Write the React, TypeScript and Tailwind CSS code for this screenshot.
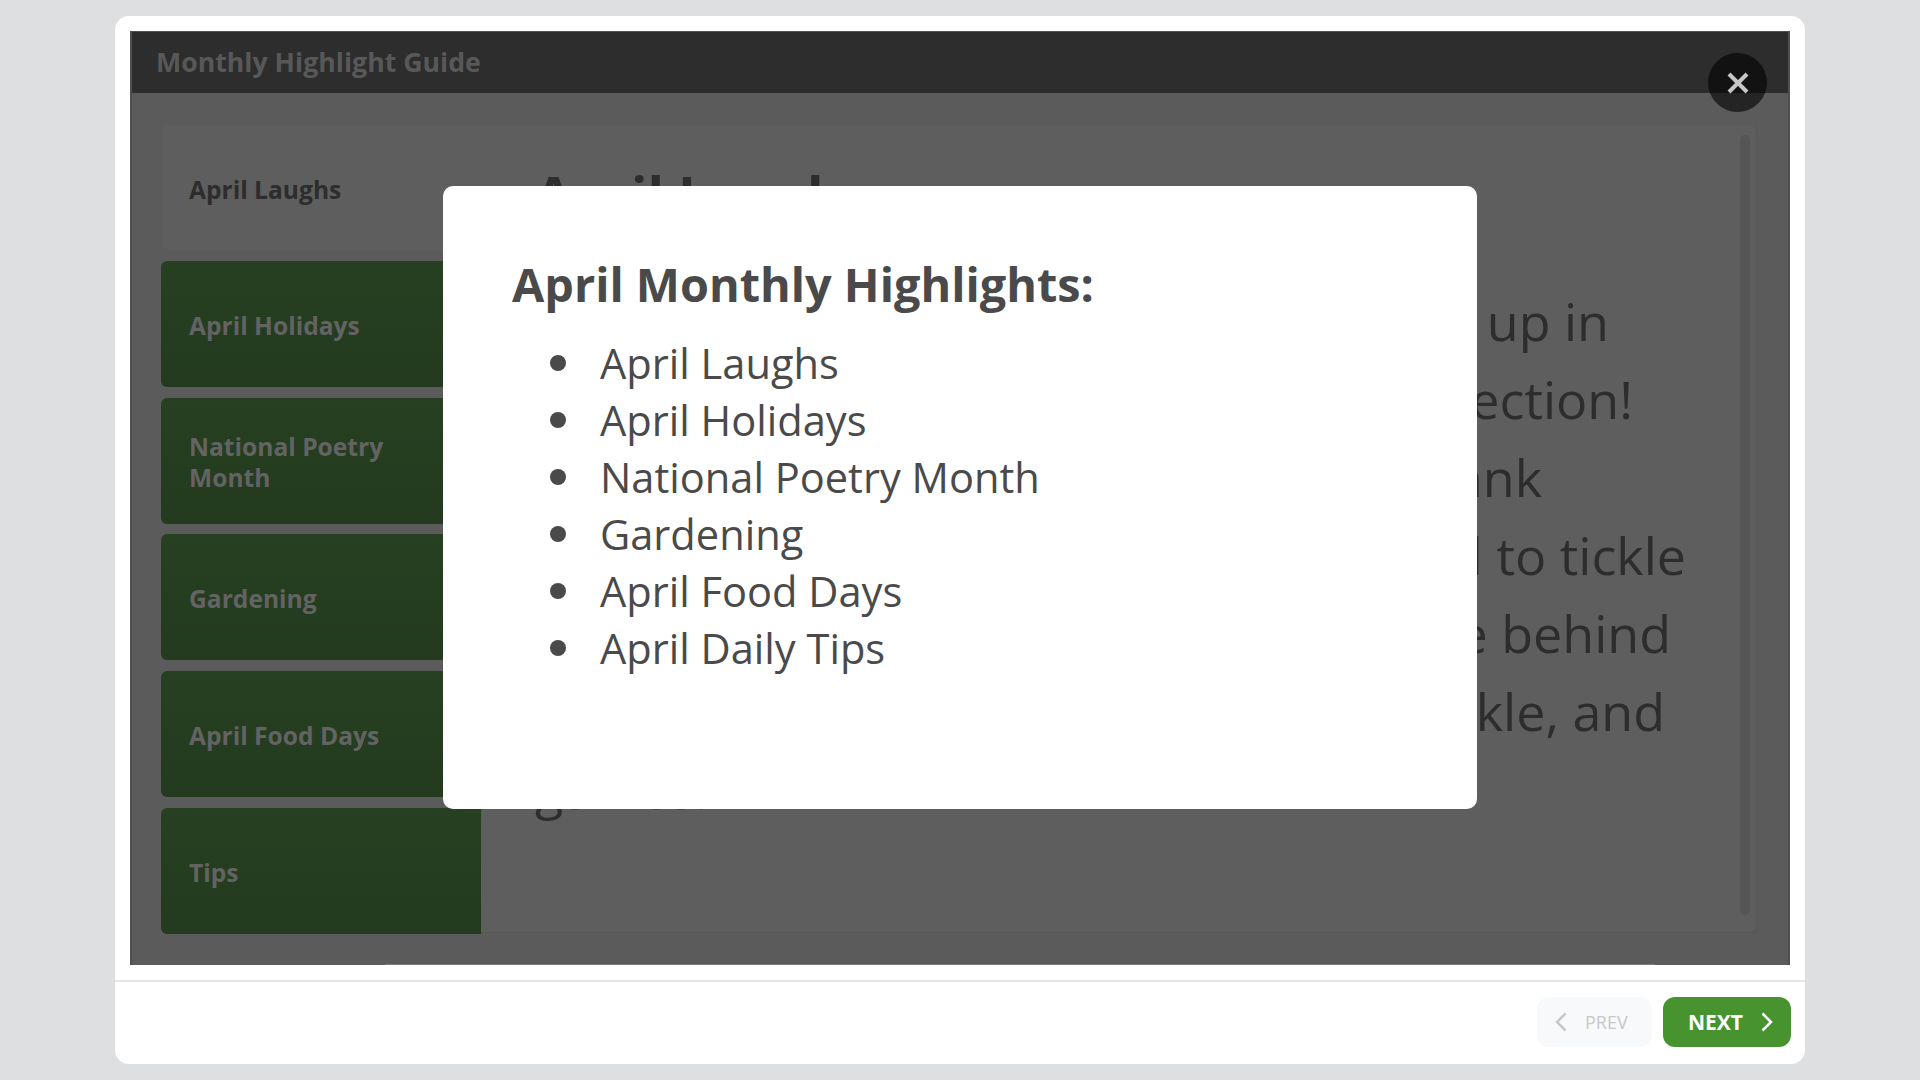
const tabs = ["April Holidays", "National Poetry Month", "Gardening", "April Food Days", "Tips"];

const topics = ["April Laughs", "April Holidays", "National Poetry Month", "Gardening", "April Food Days", "April Daily Tips"];

// line widths are fixed so the right edges land where the reference wraps
const lines = [
  { text: "Get ready to giggle and lighten up in", w: "w-[1074px]" },
  { text: "April with our special joke collection!", w: "w-[1098px]" },
  { text: "Share these silly jokes and thank", w: "w-[1007px]" },
  { text: "a friend who will be glad to tickle", w: "w-[1151px]" },
  { text: "pink. Each one has a little joke behind", w: "w-[1136px]" },
  { text: "it to bring a smile, a chuckle, and", w: "w-[1130px]" },
];

export default function App() {
  return (
    <div className="flex h-screen justify-center bg-[#dedfe1] py-4 font-['Open_Sans',sans-serif]">
      <div className="flex w-[1690px] flex-col overflow-hidden rounded-[14px] bg-white">
        {/* dimmed guide frame */}
        <div className="relative mx-[15px] mt-[15px] flex h-[934px] flex-col border-x-2 border-t border-[#505050] bg-[#5b5b5b]">
          <div className="flex h-[61px] shrink-0 items-center bg-[#2d2d2d] pl-[24px] text-[26.7px] font-bold text-[#585858]">
            Monthly Highlight Guide
          </div>

          <div className="flex flex-1 pt-[32px] pr-[31px] pl-[29px]">
            {/* Sidebar tabs */}
            <div className="flex w-[320px] shrink-0 flex-col gap-[10.8px]">
              <div className="ml-[2px] flex h-[125px] items-center rounded-l-md bg-[#5e5e5e] pt-[3px] pl-[26px] text-[24.6px] leading-[31px] font-bold text-[#2d2d2d]">
                April Laughs
              </div>
              {tabs.map((tab) => (
                <div
                  key={tab}
                  className="flex h-[126px] items-center rounded-l-md bg-gradient-to-b from-[#274021] to-[#233a1e] pt-[3px] pr-[40px] pl-[28px] text-[24.6px] leading-[31px] font-bold text-[#636363]"
                >
                  {tab}
                </div>
              ))}
            </div>

            {/* Content panel */}
            <div className="flex h-[808px] flex-1 rounded-r-md border-r border-b border-[#575757] bg-[#5e5e5e]">
              <div className="flex-1 overflow-hidden pt-[32px] pl-[54px] text-[#2d2d2d]">
                <h2 className="text-[54px] leading-[76px] font-bold">April Laughs</h2>
                <div className="mt-[49px] text-[52px] leading-[78px] whitespace-nowrap">
                  {lines.map((line) => (
                    <div key={line.text} className={`${line.w} flex justify-end`}>
                      {line.text}
                    </div>
                  ))}
                  <div>games.</div>
                </div>
              </div>
              <div className="mt-[10px] mr-[6px] h-[780px] w-[10px] rounded-[5px] bg-[#555555]" />
            </div>
          </div>

          <div className="mt-auto ml-[253px] h-px w-[1270px] bg-[#7c7c7c]" />

          {/* Close button */}
          <button className="absolute top-[21px] right-[21px] flex h-[59px] w-[59px] items-center justify-center rounded-full bg-black/60 text-[#c6c6c6]">
            <svg viewBox="0 0 22 22" className="h-[22px] w-[22px]" fill="none" stroke="currentColor" strokeWidth="4">
              <path d="M2 2 20 20M20 2 2 20" />
            </svg>
          </button>
        </div>

        {/* Footer */}
        <div className="mt-[15px] flex flex-1 items-start justify-end gap-[11px] border-t-2 border-[#e5e6e8] pt-[15px] pr-[14px]">
          <button className="flex h-[50px] w-[115px] items-center rounded-[12px] bg-[#f8f9fa] pl-[18px] text-[18px] text-[#c6c8ca]">
            <svg viewBox="0 0 12 20" className="h-[20px] w-[12px]" fill="none" stroke="#c8c8c8" strokeWidth="2.5">
              <path d="M10.5 1.5 2 10l8.5 8.5" />
            </svg>
            <span className="mt-[1px] ml-[18px]">PREV</span>
          </button>
          <button className="flex h-[50px] w-[128px] items-center rounded-[12px] bg-[#469330] pl-[25px] text-[21px] font-bold text-white">
            <span className="mt-[1px]">NEXT</span>
            <svg viewBox="0 0 12 20" className="ml-[18px] h-[20px] w-[12px]" fill="none" stroke="currentColor" strokeWidth="2.5">
              <path d="M1.5 1.5 10 10l-8.5 8.5" />
            </svg>
          </button>
        </div>
      </div>

      {/* Highlights dialog */}
      <div className="absolute top-[186px] left-[443px] h-[623px] w-[1034px] rounded-[10px] bg-white pt-[66px] pl-[69px] text-[#4a4a4a]">
        <h3 className="text-[46.8px] leading-[64px] font-bold">April Monthly Highlights:</h3>
        <ul className="mt-[18.5px] pl-[38px] text-[41.6px] leading-[57px]">
          {topics.map((topic) => (
            <li key={topic} className="flex items-center">
              <span className="mr-[34px] h-[16px] w-[16px] rounded-full bg-[#4a4a4a]" />
              {topic}
            </li>
          ))}
        </ul>
      </div>
    </div>
  );
}
